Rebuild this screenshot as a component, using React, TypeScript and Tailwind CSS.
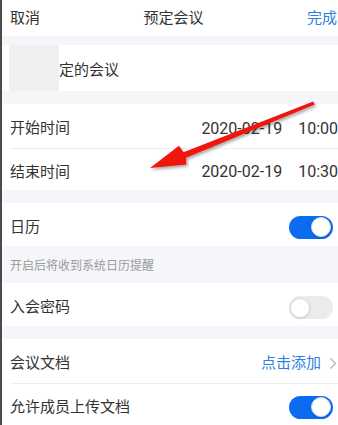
import React from "react"

const font = { fontFamily: "Roboto, 'Noto Sans CJK SC', sans-serif" }

function Toggle({ on }: { on: boolean }) {
  return (
    <div
      className={
        on
          ? "flex h-[23px] w-[44px] items-center justify-end rounded-full bg-[#0b6cf2] px-[2px]"
          : "flex h-[23px] w-[44px] items-center justify-start rounded-full bg-[#ebebed] px-[1px]"
      }
    >
      <div className="h-[20px] w-[20px] rounded-full border border-[#dcdcdc] bg-white shadow-sm" />
    </div>
  )
}

function Band({ h }: { h: string }) {
  return <div className={`${h} bg-[#f4f6f9]`} />
}

export default function App() {
  return (
    <div
      className="relative h-[425px] w-[338px] overflow-hidden border-l-2 border-[#4b4b4b] bg-white text-[15px] text-[#333]"
      style={font}
    >
      {/* header */}
      <div className="flex h-[36px] items-center justify-between pl-[8px] pr-[1px]">
        <span>取消</span>
        <span>预定会议</span>
        <span className="text-[#2f7fe0]">完成</span>
      </div>
      <Band h="h-[9px]" />

      {/* topic */}
      <div className="flex h-[46px] items-center pl-[7px]">
        <div className="h-full w-[50px] bg-[#efefef]" />
        <span className="pt-[5px]">定的会议</span>
      </div>
      <Band h="h-[13px]" />

      {/* time rows */}
      <div className="flex h-[44px] items-center justify-between pl-[8px] pt-[5px]">
        <span>开始时间</span>
        <span className="flex gap-[16px] text-[16px]">
          <span>2020-02-19</span>
          <span>10:00</span>
        </span>
      </div>
      <div className="ml-[8px] h-px bg-[#eeeeee]" />
      <div className="flex h-[41px] items-center justify-between pl-[8px] pt-[5px]">
        <span>结束时间</span>
        <span className="flex gap-[16px] text-[16px]">
          <span>2020-02-19</span>
          <span>10:30</span>
        </span>
      </div>
      <Band h="h-[13px]" />

      {/* calendar */}
      <div className="flex h-[43px] items-center justify-between pl-[8px] pr-[5px] pt-[5px]">
        <span>日历</span>
        <Toggle on />
      </div>
      <div className="flex h-[37px] items-center bg-[#f4f6f9] pl-[8px] pt-[2px] text-[12px] text-[#9a9a9a]">
        开启后将收到系统日历提醒
      </div>

      {/* password */}
      <div className="flex h-[43px] items-center justify-between pl-[8px] pr-[5px] pt-[6px]">
        <span>入会密码</span>
        <Toggle on={false} />
      </div>
      <Band h="h-[13px]" />

      {/* docs */}
      <div className="flex h-[44px] items-center justify-between pl-[8px] pr-[1px] pt-[5px]">
        <span>会议文档</span>
        <span className="flex items-center gap-[8px]">
          <span className="text-[#2f7fe0]">点击添加</span>
          <svg width="8" height="13" viewBox="0 0 8 13" fill="none">
            <path d="M1.5 1.5l5 5-5 5" stroke="#b5b5b5" strokeWidth="1.4" />
          </svg>
        </span>
      </div>
      <div className="ml-[8px] h-px bg-[#eeeeee]" />
      <div className="flex h-[44px] items-center justify-between pl-[8px] pr-[5px] pt-[2px]">
        <span>允许成员上传文档</span>
        <Toggle on />
      </div>

      {/* red annotation arrow */}
      <svg className="pointer-events-none absolute left-0 top-0" width="338" height="425" viewBox="0 0 338 425">
        <defs>
          <filter id="sh" x="-20%" y="-20%" width="140%" height="140%">
            <feDropShadow dx="1.5" dy="2" stdDeviation="1.5" floodColor="#000" floodOpacity="0.35" />
          </filter>
        </defs>
        <polygon
          filter="url(#sh)"
          fill="#ee1410"
          points="312.8,104.6 311.2,101.4 181.5,152.3 176.9,145.8 148,168 184.3,164.4 184,157.8"
        />
      </svg>
    </div>
  )
}
